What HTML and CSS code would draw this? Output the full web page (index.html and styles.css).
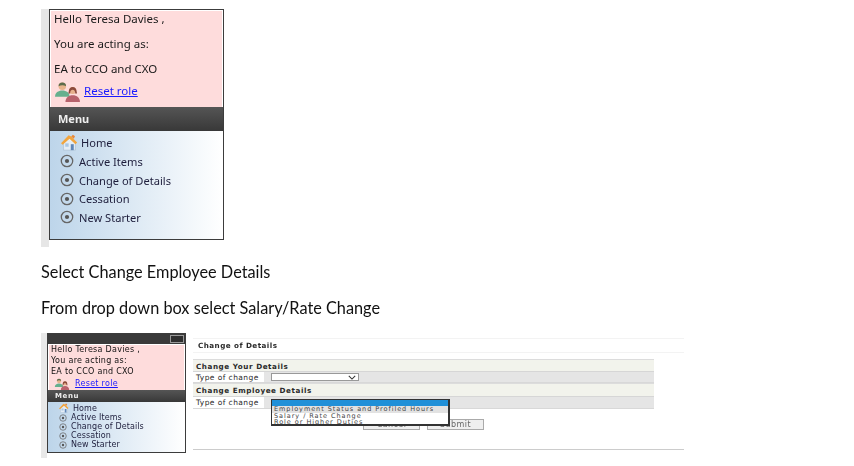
FILE: index.html
```html
<!DOCTYPE html>
<html lang="en">
<head>
<meta charset="utf-8">
<title>Change of Details</title>
<link rel="stylesheet" href="styles.css">
</head>
<body>
<svg class="defs" width="0" height="0" aria-hidden="true">
  <symbol id="i-people" viewBox="0 0 26 20">
    <circle cx="8" cy="5" r="3.6" fill="#e8b48c"/>
    <path d="M4.4 5a3.6 3.6 0 0 1 7.2 0c-2-1.4-5-1.4-7.2 0z" fill="#5d6b4c"/>
    <path d="M1 15c0-4 3-6 7-6s7 2 7 6z" fill="#66b08e"/>
    <circle cx="18" cy="9" r="3.4" fill="#e6b08c"/>
    <path d="M14.2 10a3.8 4.4 0 0 1 7.6 0l.4 2h-1.8c.4-2-1-3.600-2.400-3.600s-2.800 1.600-2.400 3.600h-1.800z" fill="#8c4a3c"/>
    <path d="M11 20c0-4 3-6.500 7-6.500s7 2.500 7 6.500z" fill="#b8626c"/>
  </symbol>
  <symbol id="i-home" viewBox="0 0 20 20">
    <path d="M3 10v9h14v-9L10 4z" fill="#e4edf6" stroke="#9fb4c8" stroke-width=".6"/>
    <path d="M11.500 12h3.500v7h-3.500z" fill="#5f86b8"/>
    <path d="M5 11h4v4H5z" fill="#a9c6e4"/>
    <path d="M0 11 9 1.500l3 1.500 7 7-2 2-7-6.500-8 7z" fill="#f2a53e"/>
    <path d="M12 3l2-2 2.500 1.500-1.500 3z" fill="#e8883a"/>
  </symbol>
  <symbol id="i-radio" viewBox="0 0 14 14">
    <circle cx="7" cy="7" r="5.700" fill="none" stroke="#666" stroke-width="1.300"/>
    <circle cx="7" cy="7" r="2.100" fill="#555"/>
  </symbol>
</svg>

<section class="shot shot-top">
  <aside class="panel panel-large">
    <div class="greeting">
      <p>Hello Teresa Davies ,</p>
      <p>You are acting as:</p>
      <p>EA to CCO and CXO</p>
      <p class="reset"><svg class="people"><use href="#i-people"/></svg><a href="#">Reset role</a></p>
    </div>
    <h2 class="menu-title">Menu</h2>
    <ul class="menu">
      <li class="home"><svg class="ico-home"><use href="#i-home"/></svg>Home</li>
      <li><svg class="ico-radio"><use href="#i-radio"/></svg>Active Items</li>
      <li><svg class="ico-radio"><use href="#i-radio"/></svg>Change of Details</li>
      <li><svg class="ico-radio"><use href="#i-radio"/></svg>Cessation</li>
      <li><svg class="ico-radio"><use href="#i-radio"/></svg>New Starter</li>
    </ul>
  </aside>
</section>

<p class="step step-one">Select Change Employee Details</p>
<p class="step step-two">From drop down box select Salary/Rate Change</p>

<section class="shot shot-bottom">
  <aside class="panel panel-small">
    <div class="titlebar"><span class="window-btn"></span></div>
    <div class="greeting">
      <p>Hello Teresa Davies ,</p>
      <p>You are acting as:</p>
      <p>EA to CCO and CXO</p>
      <p class="reset"><svg class="people"><use href="#i-people"/></svg><a href="#">Reset role</a></p>
    </div>
    <h2 class="menu-title">Menu</h2>
    <ul class="menu">
      <li class="home"><svg class="ico-home"><use href="#i-home"/></svg>Home</li>
      <li><svg class="ico-radio"><use href="#i-radio"/></svg>Active Items</li>
      <li><svg class="ico-radio"><use href="#i-radio"/></svg>Change of Details</li>
      <li><svg class="ico-radio"><use href="#i-radio"/></svg>Cessation</li>
      <li><svg class="ico-radio"><use href="#i-radio"/></svg>New Starter</li>
    </ul>
  </aside>
  <main class="content">
    <h1 class="page-title">Change of Details</h1>
    <div class="form">
      <h3 class="section">Change Your Details</h3>
      <div class="row row-first"><span class="label">Type of change</span><span class="field"><span class="select"><svg class="chev" viewBox="0 0 10 6"><path d="M1 1l4 4 4-4" fill="none" stroke="#333" stroke-width="1.300"/></svg></span></span></div>
      <h3 class="section section-employee">Change Employee Details</h3>
      <div class="row"><span class="label">Type of change</span><span class="field"></span></div>
      <div class="listbox">
        <div class="opt-blank"></div>
        <div class="opt opt-hover">Employment Status and Profiled Hours</div>
        <div class="opt">Salary / Rate Change</div>
        <div class="opt">Role or Higher Duties</div>
      </div>
    </div>
    <div class="actions"><span class="btn">Cancel</span><span class="btn">Submit</span></div>
    <hr class="rule">
  </main>
</section>
</body>
</html>
```
FILE: styles.css
```css
* { box-sizing: border-box; }
html, body { margin: 0; padding: 0; background: #fff; }
body { width: 854px; height: 466px; overflow: hidden; padding: 9px 0 0 41px; font-family: "Lato", sans-serif; }
.defs { position: absolute; }
p, h1, h2, h3, ul { margin: 0; padding: 0; font-weight: normal; }
ul { list-style: none; }

.shot { display: flex; align-items: flex-start; background: #fff; }
.shot-top { width: 183px; height: 238px; padding-left: 8px; background: linear-gradient(#e6e6e6, #e6e6e6) left top / 8px 100% no-repeat; }
.shot-bottom { width: 643px; height: 125px; margin-top: 15px; padding-left: 6px; background: linear-gradient(#e8e8e8, #e8e8e8) left top / 6px 100% no-repeat; }

.panel { flex: none; font-family: "DejaVu Sans", sans-serif; border: 1px solid #3c3c3c; filter: blur(.35px); color: #1a1a1a; }
.greeting { background: #fedcdc; border: 1px solid #fff; border-bottom-width: 0; }
.panel a { color: #1a1aff; text-decoration: underline; }
.reset { display: flex; align-items: center; }
.menu-title { color: #eee; font-weight: bold; background: linear-gradient(#555, #383838); }
.menu { background: linear-gradient(90deg, #bdd5ea, #fff); color: #1e1e3c; }
.menu li { display: flex; align-items: center; }

.panel-large { width: 175px; height: 231px; font-family: "Noto Sans", sans-serif; font-size: 11.500px; }
.panel-large .greeting { height: 97px; padding: 0 3px; }
.panel-large .greeting p { height: 16px; line-height: 16px; margin-bottom: 9px; }
.panel-large .greeting .reset { height: 22px; margin: -6px 0 0; }
.panel-large .people { width: 27px; height: 21px; margin-right: 3px; flex: none; }
.panel-large .menu-title { height: 24px; line-height: 24px; padding-left: 8px; font-size: 11px; }
.panel-large .menu { height: 108px; padding: 1px 0 0 9px; font-size: 11.100px; }
.panel-large .menu li { height: 18.700px; }
.panel-large .menu .home { height: 20px; }
.panel-large .ico-home { width: 17px; height: 17px; margin: 0 3px 0 2px; }
.panel-large .ico-radio { width: 14px; height: 14px; margin: 0 5px 0 1px; }

.step { color: #111; font-size: 16.300px; line-height: 20px; filter: blur(.2px); }
.step-one { margin-top: 15px; }
.step-two { margin-top: 16px; }

.panel-small { width: 139px; height: 120px; font-size: 8px; letter-spacing: .28px; filter: blur(.5px); color: #111; }
.titlebar { height: 10px; background: #3a3a3a; display: flex; justify-content: flex-end; padding: 1px 1px 0 0; }
.window-btn { width: 14px; height: 8px; border: 1px solid #999; background: #2e2e2e; }
.panel-small .greeting { height: 46px; padding: 0 2px; }
.panel-small .greeting p { height: 11px; line-height: 10px; }
.panel-small .greeting .reset { height: 11px; }
.panel-small .people { width: 18px; height: 12px; margin: 0 4px 0 2px; flex: none; }
.panel-small .menu-title { height: 12px; line-height: 13px; padding-left: 7px; font-size: 7px; letter-spacing: .6px; }
.panel-small .menu { height: 50px; padding: 1px 0 0 9px; letter-spacing: .1px; }
.panel-small .menu li { height: 9px; }
.panel-small .menu .home { height: 10px; }
.panel-small .ico-home { width: 12px; height: 10px; margin: 0 3px 0 1px; }
.panel-small .ico-radio { width: 10px; height: 8px; margin: 0 3px 0 1px; }

.content { flex: none; width: 491px; margin: 5px 0 0 7px; font-family: "DejaVu Sans", sans-serif; font-size: 7.500px; letter-spacing: .42px; color: #2a2a2a; filter: blur(.45px); position: relative; }
.page-title { height: 15px; line-height: 13px; font-size: 7.200px; font-weight: bold; padding-left: 5px; letter-spacing: .45px; border-top: 1px solid #f3f3f3; border-bottom: 1px solid #f3f3f3; }
.form { position: relative; width: 461px; margin-top: 6px; }
.section { height: 13px; line-height: 14px; font-size: 7.200px; font-weight: bold; letter-spacing: .55px; padding-left: 3px; background: #f2f3ec; border-top: 1px solid #dcdcdc; border-bottom: 1px solid #d6d6d6; }
.section-employee { height: 14px; }
.row { display: flex; height: 12px; line-height: 11px; background: #e5e5e5; border-bottom: 1px solid #d8d8d8; }
.row-first { height: 11px; }
.label { width: 72px; padding-left: 3px; background: #fff; flex: none; border-right: 1px solid #e5e5e5; }
.field { flex: 1; padding: 1px 0 0 6px; }
.select { display: flex; align-items: center; justify-content: flex-end; width: 88px; height: 8px; padding-right: 2px; background: #fff; border: 1px solid #999; }
.chev { width: 8px; height: 5px; }
.listbox { position: absolute; left: 78px; top: 40px; width: 179px; height: 27px; background: #fff; border: 1px solid #333; border-right-width: 2px; border-bottom-width: 2px; font-size: 6.500px; line-height: 6px; letter-spacing: .95px; }
.opt-blank { height: 6px; background: #2090d8; }
.opt { height: 6px; padding-left: 2px; white-space: nowrap; color: #444; }
.opt-hover { height: 6.500px; background: #e2e2e2; }
.actions { display: flex; gap: 7px; margin: 10px 0 0 170px; }
.btn { width: 57px; height: 11px; line-height: 9px; text-align: center; font-size: 8px; color: #666; background: #efefef; border: 1px solid #aaa; }
.rule { margin: 19px 0 0; border: 0; border-top: 1px solid #ccc; }
```
